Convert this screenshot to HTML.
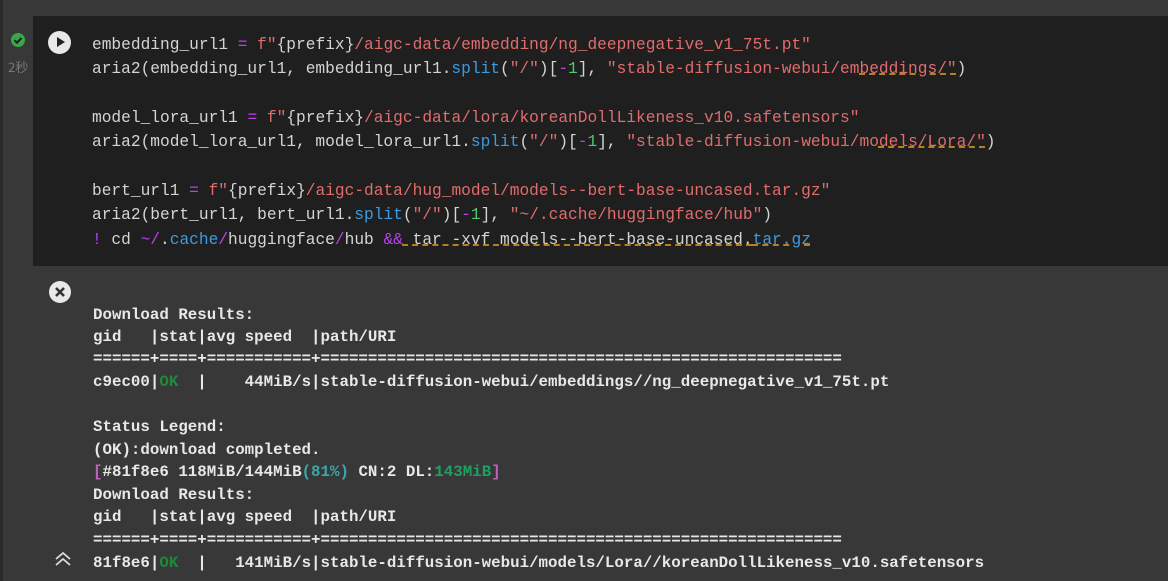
<!DOCTYPE html>
<html><head><meta charset="utf-8"><style>
body{margin:0;width:1168px;height:581px;background:#383838;overflow:hidden;position:relative;font-family:"Liberation Mono",monospace}
.strip{position:absolute;left:0;top:0;width:3px;height:581px;background:#2a2a2a}
.code{position:absolute;left:33px;top:16px;width:1135px;height:250px;background:#1f1f1f}
.cl{position:absolute;left:92px;font-size:16.2px;color:#d4d4d4;white-space:pre;line-height:20px}
.s{color:#e06c6c}.b{color:#3c9be0}.p{color:#b642e8}.g{color:#4ec96e}
.u{text-decoration:underline dashed #e8a020}
.out{position:absolute;left:93px;font-size:15.8px;color:#e8e8e8;white-space:pre;line-height:20px;font-weight:bold}
.ok{color:#1f8a3a}.pk{color:#c060c0}.tl{color:#3aa8a8}.gr{color:#20a060}
.run{position:absolute;left:48px;top:31px;width:23px;height:23px;border-radius:50%;background:#e8e8e8}
.run:after{content:"";position:absolute;left:9px;top:6px;border-left:8px solid #222;border-top:5.5px solid transparent;border-bottom:5.5px solid transparent}
</style></head><body>
<div class="strip"></div>
<div style="position:absolute;left:11px;top:33px;width:14px;height:14px;border-radius:50%;background:#3aa64a"></div>
<svg style="position:absolute;left:11px;top:33px" width="14" height="14"><path d="M3.5 7.2l2.5 2.5 4.5-4.7" stroke="#1f1f1f" stroke-width="2" fill="none"/></svg>
<div style="position:absolute;left:8px;top:57px;font-size:13px;color:#777;font-family:'Noto Sans CJK SC',sans-serif">2秒</div>
<div class="code"></div>
<div class="run"></div>
<div class="cl" style="top:35px">embedding_url1 <span class="p">=</span> <span class="s">f"</span>{prefix}<span class="s">/aigc-data/embedding/ng_deepnegative_v1_75t.pt"</span></div>
<div class="cl" style="top:59px">aria2(embedding_url1, embedding_url1.<span class="b">split</span>(<span class="s">"/"</span>)[<span class="p">-</span><span class="g">1</span>], <span class="s">"stable-diffusion-webui/em<span class="u">beddings/"</span></span>)</div>
<div class="cl" style="top:108px">model_lora_url1 <span class="p">=</span> <span class="s">f"</span>{prefix}<span class="s">/aigc-data/lora/koreanDollLikeness_v10.safetensors"</span></div>
<div class="cl" style="top:132px">aria2(model_lora_url1, model_lora_url1.<span class="b">split</span>(<span class="s">"/"</span>)[<span class="p">-</span><span class="g">1</span>], <span class="s">"stable-diffusion-webui/mo<span class="u">dels/Lora/"</span></span>)</div>
<div class="cl" style="top:181px">bert_url1 <span class="p">=</span> <span class="s">f"</span>{prefix}<span class="s">/aigc-data/hug_model/models--bert-base-uncased.tar.gz"</span></div>
<div class="cl" style="top:205px">aria2(bert_url1, bert_url1.<span class="b">split</span>(<span class="s">"/"</span>)[<span class="p">-</span><span class="g">1</span>], <span class="s">"~/.cache/huggingface/hub"</span>)</div>
<div class="cl" style="top:230px"><span class="p">!</span> cd <span class="p">~/</span>.<span class="b">cache</span><span class="p">/</span>huggingface<span class="p">/</span>hub <span class="p">&amp;&amp;</span><span class="u"> tar -xvf models--bert-base-uncased.<span class="b">tar.gz</span></span></div>
<div style="position:absolute;left:49px;top:281px;width:22px;height:22px;border-radius:50%;background:#e8e8e8"></div>
<svg style="position:absolute;left:49px;top:281px" width="22" height="22"><path d="M7 7l8 8M15 7l-8 8" stroke="#333" stroke-width="2.6"/></svg>
<div class="out" style="top:305px">Download Results:</div>
<div class="out" style="top:327px">gid   |stat|avg speed  |path/URI</div>
<div class="out" style="top:349px">======+====+===========+=======================================================</div>
<div class="out" style="top:372px">c9ec00|<span class="ok">OK</span>  |    44MiB/s|stable-diffusion-webui/embeddings//ng_deepnegative_v1_75t.pt</div>
<div class="out" style="top:417px">Status Legend:</div>
<div class="out" style="top:440px">(OK):download completed.</div>
<div class="out" style="top:462px"><span class="pk">[</span>#81f8e6 118MiB/144MiB<span class="tl">(81%)</span> CN:2 DL:<span class="gr">143MiB</span><span class="pk">]</span></div>
<div class="out" style="top:485px">Download Results:</div>
<div class="out" style="top:507px">gid   |stat|avg speed  |path/URI</div>
<div class="out" style="top:530px">======+====+===========+=======================================================</div>
<div class="out" style="top:553px">81f8e6|<span class="ok">OK</span>  |   141MiB/s|stable-diffusion-webui/models/Lora//koreanDollLikeness_v10.safetensors</div>
<svg style="position:absolute;left:54px;top:550px" width="18" height="18"><path d="M2 9l7-6 7 6M2 15l7-6 7 6" stroke="#ddd" stroke-width="1.8" fill="none"/></svg>
</body></html>
